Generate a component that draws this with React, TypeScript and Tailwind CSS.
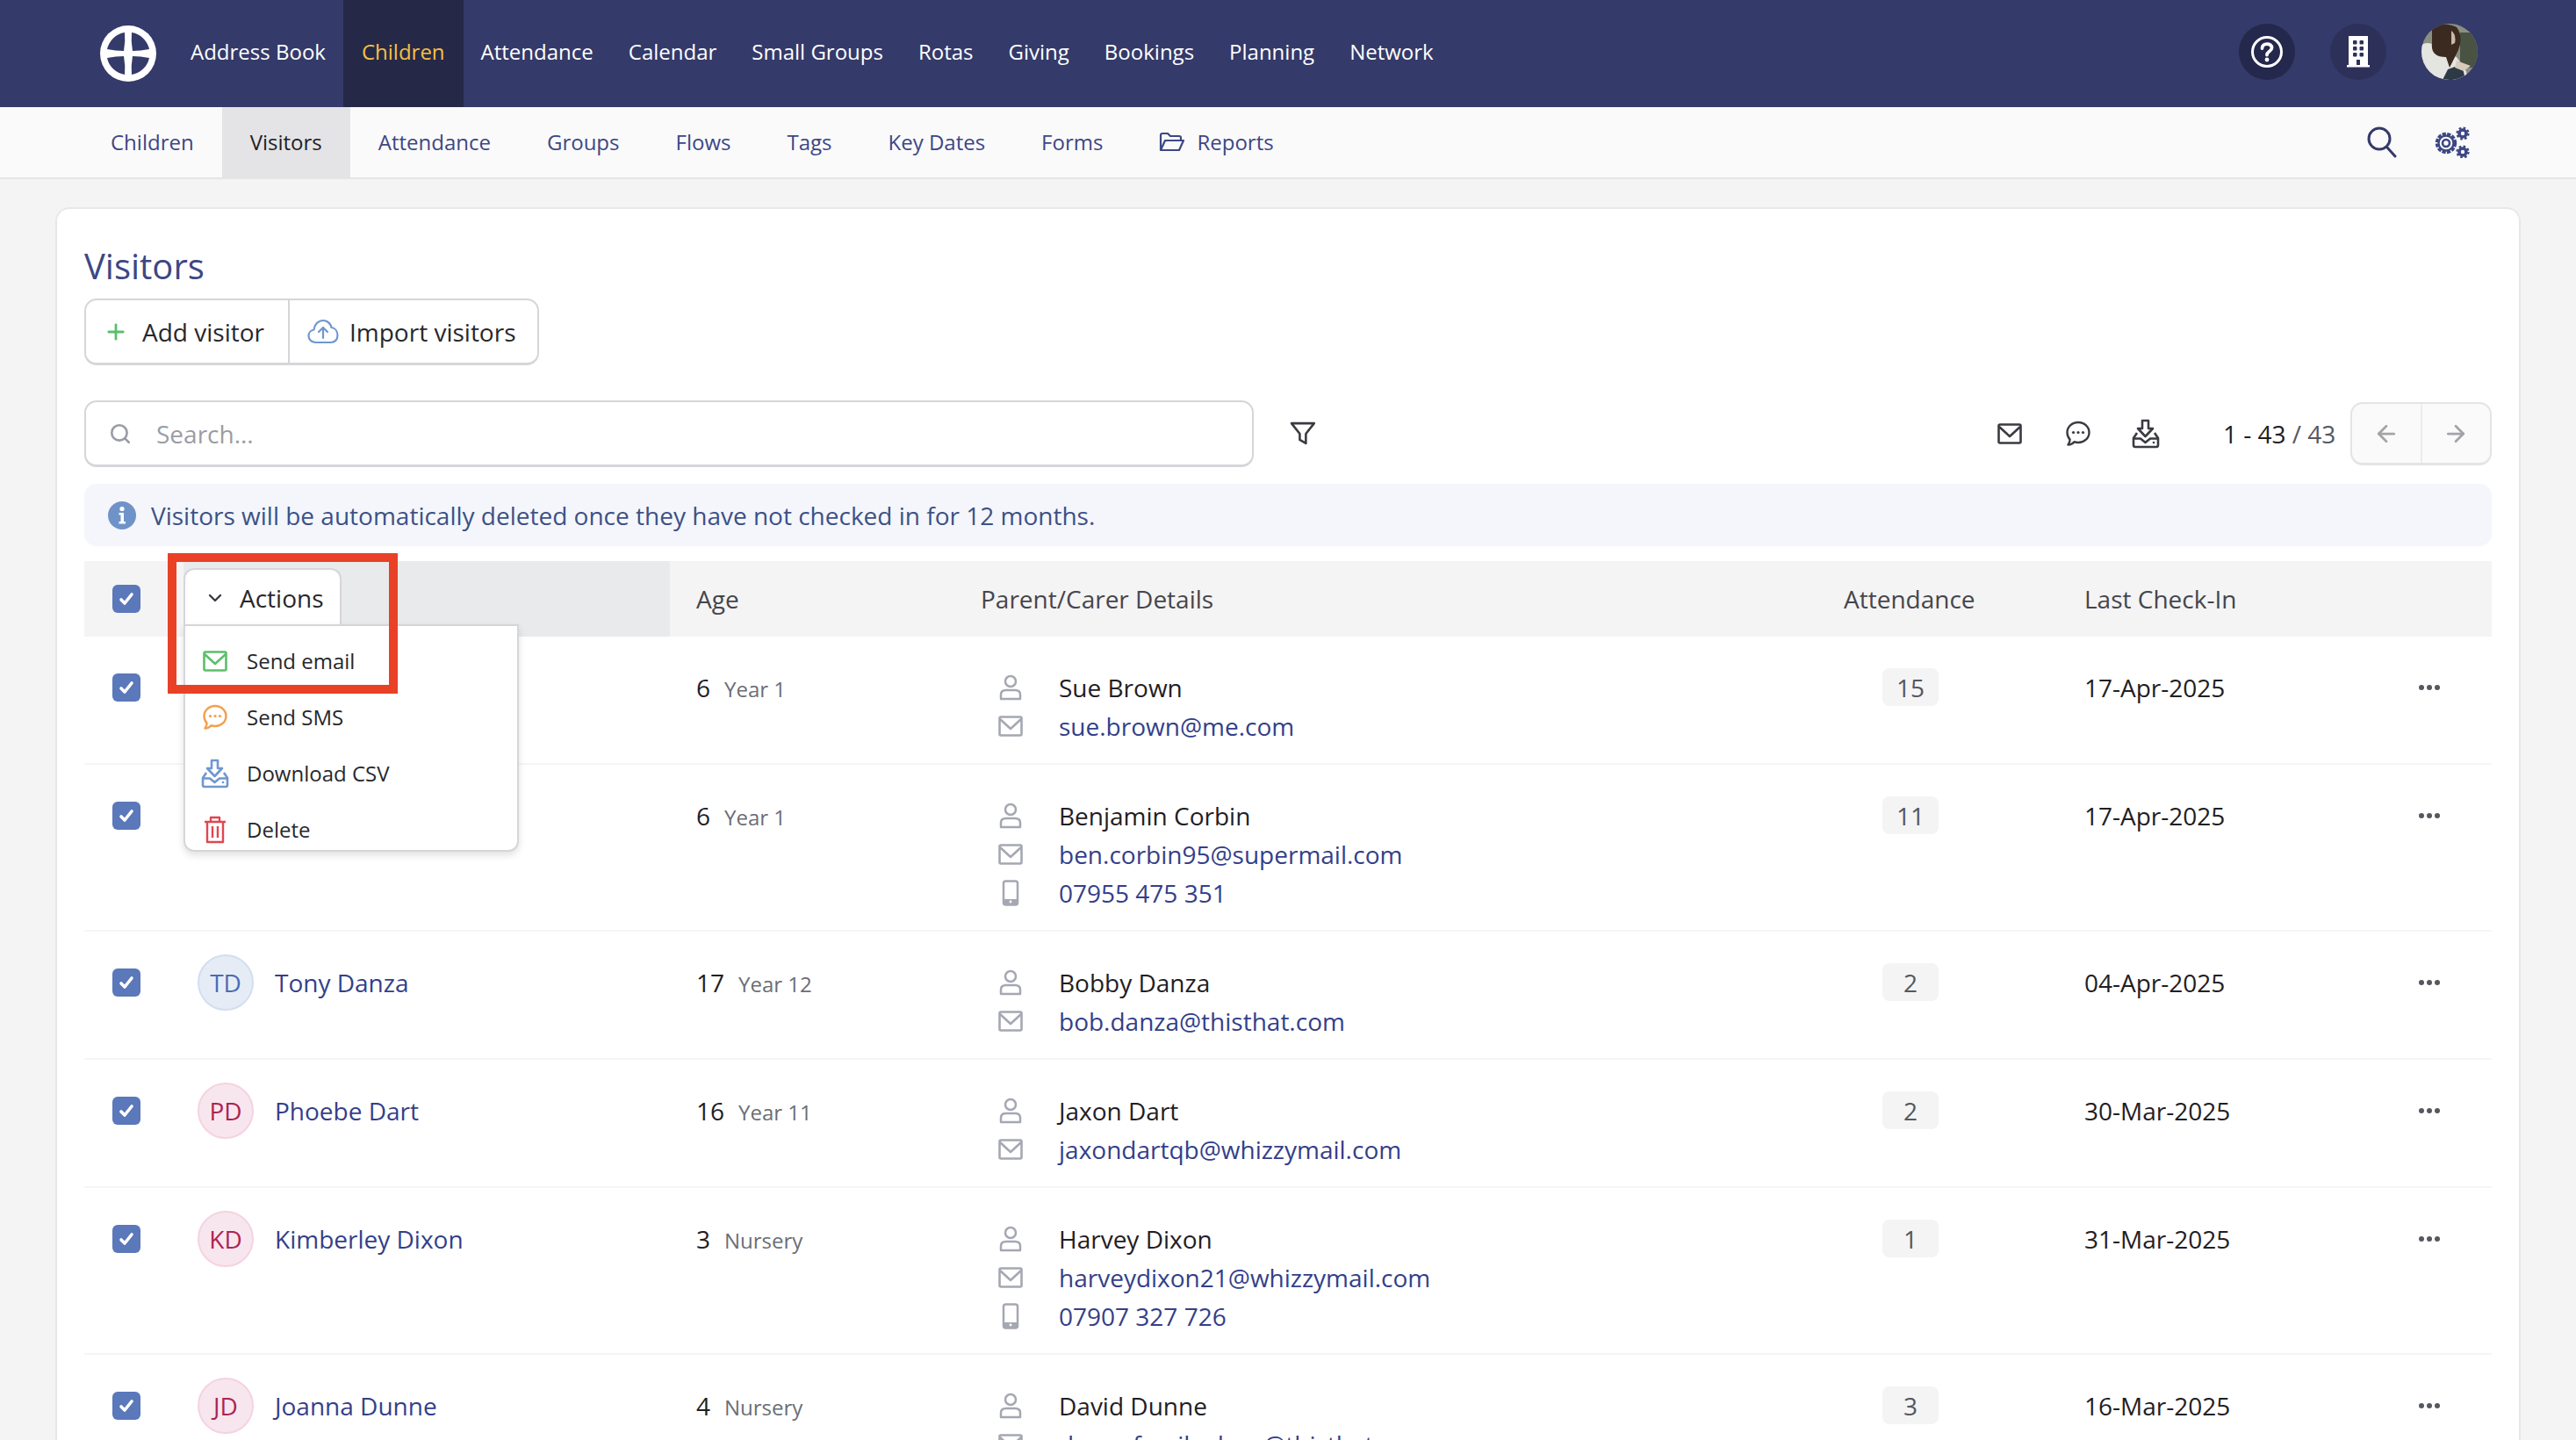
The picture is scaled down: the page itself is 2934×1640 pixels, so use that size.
import { ArrowLeft, ArrowRight, ChevronDown, Plus, Search } from 'lucide-react'

const topNav = ['Address Book', 'Children', 'Attendance', 'Calendar', 'Small Groups', 'Rotas', 'Giving', 'Bookings', 'Planning', 'Network']
const subNav = ['Children', 'Visitors', 'Attendance', 'Groups', 'Flows', 'Tags', 'Key Dates', 'Forms']

interface Visitor {
  name?: string
  initials?: string
  tone?: 'blue' | 'pink'
  age: string
  group: string
  parent: string
  email: string
  phone?: string
  attendance: string
  lastCheckIn: string
}

const visitors: Visitor[] = [
  { age: '6', group: 'Year 1', parent: 'Sue Brown', email: 'sue.brown@me.com', attendance: '15', lastCheckIn: '17-Apr-2025' },
  { age: '6', group: 'Year 1', parent: 'Benjamin Corbin', email: 'ben.corbin95@supermail.com', phone: '07955 475 351', attendance: '11', lastCheckIn: '17-Apr-2025' },
  { name: 'Tony Danza', initials: 'TD', tone: 'blue', age: '17', group: 'Year 12', parent: 'Bobby Danza', email: 'bob.danza@thisthat.com', attendance: '2', lastCheckIn: '04-Apr-2025' },
  { name: 'Phoebe Dart', initials: 'PD', tone: 'pink', age: '16', group: 'Year 11', parent: 'Jaxon Dart', email: 'jaxondartqb@whizzymail.com', attendance: '2', lastCheckIn: '30-Mar-2025' },
  { name: 'Kimberley Dixon', initials: 'KD', tone: 'pink', age: '3', group: 'Nursery', parent: 'Harvey Dixon', email: 'harveydixon21@whizzymail.com', phone: '07907 327 726', attendance: '1', lastCheckIn: '31-Mar-2025' },
  { name: 'Joanna Dunne', initials: 'JD', tone: 'pink', age: '4', group: 'Nursery', parent: 'David Dunne', email: 'dunnefamily.dave@thisthat.com', attendance: '3', lastCheckIn: '16-Mar-2025' },
]

function Logo() {
  return (
    <svg width="64" height="64" viewBox="0 0 64 64">
      <circle cx="32" cy="32" r="32" fill="#fff" />
      <path d="M28 8 A24.5 24.5 0 0 0 8 27 Q18 29 27 29 Q29 18 28 8Z" fill="#343a69" />
      <path d="M36 8 A24.5 24.5 0 0 1 56 27 Q46 29 37 29 Q35 18 36 8Z" fill="#343a69" />
      <path d="M28 56 A24.5 24.5 0 0 1 8 37 Q18 35 27 35 Q29 46 28 56Z" fill="#343a69" />
      <path d="M36 56 A24.5 24.5 0 0 0 56 37 Q46 35 37 35 Q35 46 36 56Z" fill="#343a69" />
    </svg>
  )
}

function Photo() {
  return (
    <svg width="64" height="64" viewBox="0 0 64 64" className="rounded-full">
      <rect width="64" height="64" fill="#8b8f82" />
      <rect x="44" y="10" width="20" height="40" fill="#4a5244" />
      <path d="M0 64 L0 24 Q10 18 22 30 L40 38 L50 52 L54 64Z" fill="#e4e5e1" />
      <path d="M12 6 Q24 -4 40 4 Q48 14 42 30 L32 50 L28 38 Q10 38 12 22Z" fill="#3b2a20" />
      <path d="M34 8 Q40 12 38 22 L34 24Z" fill="#c9b8a6" />
      <path d="M24 64 L30 52 L46 46 L50 64Z" fill="#2d3a46" />
      <path d="M40 42 L56 48 L48 54 L38 50Z" fill="#d8cbbb" />
    </svg>
  )
}

function MailIcon({ color, size = 28 }: { color: string; size?: number }) {
  return (
    <svg width={size} height={size} viewBox="0 0 28 28" fill="none" stroke={color} strokeWidth="2.6" strokeLinejoin="round">
      <rect x="1.5" y="3.5" width="25" height="21" rx="1.5" />
      <path d="M2 6 L14 17 L26 6" />
    </svg>
  )
}

function ChatIcon({ color }: { color: string }) {
  return (
    <svg width="28" height="30" viewBox="0 0 28 30" fill="none" stroke={color} strokeWidth="2.4" strokeLinejoin="round">
      <path d="M14 2 C21 2 26.5 7 26.5 13.5 C26.5 20 21 25 14 25 C12.5 25 11 24.8 9.5 24.2 C8 26 5.5 27.5 2.5 27.5 C4 25.8 4.6 23.8 4.6 21.6 C2.6 19.5 1.5 16.8 1.5 13.5 C1.5 7 7 2 14 2Z" />
      <g fill={color} stroke="none">
        <circle cx="8.5" cy="13.5" r="1.6" />
        <circle cx="14" cy="13.5" r="1.6" />
        <circle cx="19.5" cy="13.5" r="1.6" />
      </g>
    </svg>
  )
}

function TrayIcon({ color }: { color: string }) {
  return (
    <svg width="32" height="34" viewBox="0 0 32 34" fill="none" stroke={color} strokeWidth="2.6" strokeLinejoin="round">
      <path d="M12 2 H19 V11 H24 L15.5 20 L7 11 H12Z" />
      <path d="M6 16 L2 22 V30 Q2 32 4 32 H28 Q30 32 30 30 V22 L26 16" />
      <path d="M2 22.5 H10 L15.5 27 L21 22.5 H30" />
      <circle cx="25" cy="27" r="1.3" fill={color} stroke="none" />
    </svg>
  )
}

function PersonIcon() {
  return (
    <svg width="26" height="30" viewBox="0 0 26 30" fill="none" stroke="#a5a8b2" strokeWidth="2.5">
      <circle cx="13" cy="8" r="6" />
      <path d="M2 28 V23 Q2 18 8 18 H18 Q24 18 24 23 V28Z" strokeLinejoin="round" />
    </svg>
  )
}

function PhoneIcon() {
  return (
    <svg width="20" height="30" viewBox="0 0 20 30" fill="none">
      <rect x="2" y="1.5" width="16" height="27" rx="2.5" stroke="#a5a8b2" strokeWidth="2.5" />
      <rect x="2" y="22" width="16" height="6.5" fill="#a5a8b2" />
      <circle cx="10" cy="25" r="1.4" fill="#fff" />
    </svg>
  )
}

function Checkbox() {
  return (
    <div className="flex h-[32px] w-[32px] shrink-0 items-center justify-center rounded-[6px] bg-[#5a78ba]">
      <svg width="20" height="20" viewBox="0 0 20 20" fill="none" stroke="#fff" strokeWidth="3.6" strokeLinecap="round" strokeLinejoin="round">
        <path d="M4 11 L8 15 L16 5" />
      </svg>
    </div>
  )
}

function VisitorRow({ visitor }: { visitor: Visitor }) {
  const { name, initials, tone, age, group, parent, email, phone, attendance, lastCheckIn } = visitor
  return (
    <div className="flex border-b-2 border-[#f4f5f8] pt-[36px] pb-[20px] text-[28px] leading-[44px] text-[#1f2024]">
      <div className="flex h-[44px] w-[113px] shrink-0 items-center pl-[32px]">
        <Checkbox />
      </div>
      <div className="flex h-[44px] w-[584px] shrink-0 items-center gap-[24px] pl-[16px]">
        {initials && (
          <div
            className={
              tone === 'blue'
                ? 'flex h-[64px] w-[64px] shrink-0 items-center justify-center rounded-full border-2 border-[#d3deef] bg-[#e6ecf6] text-[#4a6cb3]'
                : 'flex h-[64px] w-[64px] shrink-0 items-center justify-center rounded-full border-2 border-[#f4d3e1] bg-[#f8e6ef] text-[#ad2450]'
            }
          >
            {initials}
          </div>
        )}
        <span className="text-[#343f8a]">{name}</span>
      </div>
      <div className="flex h-[44px] w-[324px] shrink-0 items-baseline gap-[16px]">
        <span>{age}</span>
        <span className="text-[24px] text-[#6b6e76]">{group}</span>
      </div>
      <div className="w-[983px] shrink-0">
        <div className="flex h-[44px] items-center">
          <div className="flex w-[89px] justify-center pr-[22px]"><PersonIcon /></div>
          <span>{parent}</span>
        </div>
        <div className="flex h-[44px] items-center">
          <div className="flex w-[89px] justify-center pr-[22px]"><MailIcon color="#a5a8b2" /></div>
          <span className="text-[#343f8a]">{email}</span>
        </div>
        {phone && (
          <div className="flex h-[44px] items-center">
            <div className="flex w-[89px] justify-center pr-[22px]"><PhoneIcon /></div>
            <span className="text-[#343f8a]">{phone}</span>
          </div>
        )}
      </div>
      <div className="w-[274px] shrink-0 pl-[44px]">
        <div className="flex h-[43px] w-[64px] items-center justify-center rounded-[8px] bg-[#f4f4f5] text-[#55585f]">{attendance}</div>
      </div>
      <div className="flex h-[44px] flex-1 items-center justify-between pr-[58px]">
        <span>{lastCheckIn}</span>
        <svg width="26" height="8" viewBox="0 0 26 8" fill="#55585f">
          <circle cx="4" cy="4" r="3" />
          <circle cx="13" cy="4" r="3" />
          <circle cx="22" cy="4" r="3" />
        </svg>
      </div>
    </div>
  )
}

export default function App() {
  return (
    <div className="h-[1640px] overflow-hidden bg-[#f4f4f4] font-['Open_Sans',sans-serif]">
      {/* Main nav */}
      <div className="flex h-[122px] items-center bg-[#343a69] pl-[114px] pr-[112px]">
        <Logo />
        <div className="ml-[19px] flex h-full flex-1 items-stretch">
          {topNav.map((item) => (
            <div
              key={item}
              className={
                item === 'Children'
                  ? 'flex items-center bg-[#252947] px-[21px] pb-[4px] text-[24px] font-medium text-[#f5c044]'
                  : 'flex items-center px-[20px] pb-[4px] text-[24px] font-medium text-white'
              }
            >
              {item}
            </div>
          ))}
        </div>
        <div className="flex items-center gap-[40px] pb-[4px]">
          <div className="flex h-[64px] w-[64px] items-center justify-center rounded-full bg-[#24284c]">
            <svg width="38" height="38" viewBox="0 0 38 38" fill="none" stroke="#fff">
              <circle cx="19" cy="19" r="16.5" strokeWidth="3" />
              <path d="M13.5 15 C13.5 8.5 24.5 8.5 24.5 14.5 C24.5 18.5 19 18.5 19 22.5" strokeWidth="3.8" strokeLinecap="round" />
              <circle cx="19" cy="28" r="2.4" fill="#fff" stroke="none" />
            </svg>
          </div>
          <div className="flex h-[64px] w-[64px] items-center justify-center rounded-full bg-[#2d3159]">
            <svg width="26" height="36" viewBox="0 0 26 36">
              <rect x="2" y="0" width="22" height="34" fill="#fff" />
              <rect x="0" y="33" width="26" height="2.5" fill="#fff" />
              <g fill="#2d3159">
                <rect x="7" y="5" width="4.5" height="4.5" rx="1" />
                <rect x="14.5" y="5" width="4.5" height="4.5" rx="1" />
                <rect x="7" y="12" width="4.5" height="4.5" rx="1" />
                <rect x="14.5" y="12" width="4.5" height="4.5" rx="1" />
                <rect x="7" y="19" width="4.5" height="4.5" rx="1" />
                <rect x="14.5" y="19" width="4.5" height="4.5" rx="1" />
                <rect x="11" y="27" width="4" height="6" />
              </g>
            </svg>
          </div>
          <Photo />
        </div>
      </div>

      {/* Sub nav */}
      <div className="flex h-[82px] items-stretch border-b-2 border-[#e4e4e6] bg-[#fafafa] pl-[94px] pr-[120px] pb-0">
        {subNav.map((item) => (
          <div
            key={item}
            className={
              item === 'Visitors'
                ? 'flex items-center bg-[#e4e4e6] px-[32px] text-[24px] font-medium text-[#1f2024]'
                : 'flex items-center px-[32px] text-[24px] font-medium text-[#3d4785]'
            }
          >
            {item}
          </div>
        ))}
        <div className="flex flex-1 items-center px-[32px] text-[24px] font-medium text-[#3d4785]">
          <svg width="30" height="24" viewBox="0 0 30 24" fill="none" stroke="#3d4785" strokeWidth="2.2" strokeLinejoin="round">
            <path d="M2 21 V4 Q2 2 4 2 H10 L13 5 H23 Q25 5 25 7 V9" />
            <path d="M2 21 L7 10 H28 L23 21Z" />
          </svg>
          <span className="ml-[13px]">Reports</span>
        </div>
        <div className="flex items-center gap-[42px]">
          <svg width="34" height="36" viewBox="0 0 34 36" fill="none" stroke="#343a69" strokeWidth="3" strokeLinecap="round">
            <circle cx="14" cy="14" r="12" />
            <path d="M23 24 L32 34" />
          </svg>
          <svg width="42" height="36" viewBox="0 0 42 36" fill="none" stroke="#3d4785">
            <circle cx="14" cy="19" r="4" strokeWidth="2.6" />
            <circle cx="14" cy="19" r="10.5" strokeWidth="3.4" strokeDasharray="4.2 1.4" />
            <circle cx="14" cy="19" r="8.5" strokeWidth="2.4" />
            <circle cx="33" cy="8" r="4" strokeWidth="3.6" />
            <circle cx="33" cy="8" r="6.4" strokeWidth="2.4" strokeDasharray="2.6 2.4" />
            <circle cx="33" cy="29" r="4" strokeWidth="3.6" />
            <circle cx="33" cy="29" r="6.4" strokeWidth="2.4" strokeDasharray="2.6 2.4" />
          </svg>
        </div>
      </div>

      {/* Card */}
      <div className="relative mx-[63px] mt-[32px] h-[1500px] rounded-t-[16px] border-2 border-b-0 border-[#e8e8ea] bg-white px-[31px] pt-[38px]">
        <h1 className="text-[40px] font-medium leading-[54px] text-[#3d4785]">Visitors</h1>

        <div className="mt-[10px] inline-flex h-[76px] items-stretch rounded-[14px] border-2 border-b-[3px] border-[#d6d6da] text-[28px] text-[#27282c]">
          <div className="flex w-[232px] items-center gap-[16px] border-r-2 border-[#d6d6da] pl-[20px]">
            <Plus size={28} color="#5bbf6b" strokeWidth={2.4} />
            <span>Add visitor</span>
          </div>
          <div className="flex items-center gap-[12px] pl-[20px] pr-[24px]">
            <svg width="36" height="32" viewBox="0 0 36 32" fill="none" stroke="#6f97d0" strokeWidth="2.2" strokeLinejoin="round">
              <path d="M10 28 C4 28 1.5 24 1.5 20.5 C1.5 17 4 14 7.5 13.5 C8 8 12 3 18 3 C24 3 27 8 27.5 11 C31.5 11.5 34.5 15 34.5 20 C34.5 25 31 28 27 28Z" />
              <path d="M18 23 V11 M13 16 L18 11 L23 16" strokeLinecap="round" />
            </svg>
            <span>Import visitors</span>
          </div>
        </div>

        {/* Search row */}
        <div className="mt-[40px] flex items-center">
          <div className="flex h-[76px] w-[1343px] items-center rounded-[14px] border-2 border-b-[3px] border-[#d6d6da] pl-[26px] text-[28px] text-[#9a9ca5]">
            <Search size={26} color="#9a9ca5" strokeWidth={2.4} />
            <span className="ml-[28px]">Search...</span>
          </div>
          <svg className="ml-[41px]" width="30" height="30" viewBox="0 0 30 30" fill="none" stroke="#3a3b42" strokeWidth="2.6" strokeLinejoin="round">
            <path d="M2 3 H28 L18.5 15 V26 L11.5 22 V15Z" />
          </svg>
          <div className="ml-[776px]"><MailIcon color="#3a3b42" /></div>
          <div className="ml-[50px]"><ChatIcon color="#3a3b42" /></div>
          <div className="ml-[47px]"><TrayIcon color="#3a3b42" /></div>
          <div className="ml-[72px] whitespace-nowrap text-[28px] text-[#1f2024]">
            1 - 43 <span className="text-[#55585f]">/ 43</span>
          </div>
          <div className="ml-[17px] flex h-[72px] w-[162px] rounded-[14px] border-2 border-b-[3px] border-[#e4e4e6] bg-[#fafafa]">
            <div className="flex flex-1 items-center justify-center border-r-2 border-[#ececee]">
              <ArrowLeft size={30} color="#a3a4a9" strokeWidth={2.2} />
            </div>
            <div className="flex flex-1 items-center justify-center">
              <ArrowRight size={30} color="#a3a4a9" strokeWidth={2.2} />
            </div>
          </div>
        </div>

        {/* Info banner */}
        <div className="mt-[19px] flex h-[71px] items-center rounded-[14px] bg-[#f4f6fb] pl-[27px] text-[28px] text-[#3d5186]">
          <svg width="32" height="32" viewBox="0 0 32 32">
            <circle cx="16" cy="16" r="16" fill="#6f93c9" />
            <circle cx="16" cy="8.5" r="2.6" fill="#fff" />
            <path d="M12.5 13 H18 V23 H20 V25.5 H12.5 V23 H14.5 V15.5 H12.5Z" fill="#fff" />
          </svg>
          <span className="ml-[17px]">Visitors will be automatically deleted once they have not checked in for 12 months.</span>
        </div>

        {/* Table head */}
        <div className="mt-[17px] flex h-[86px] items-center bg-[#f4f4f4] text-[28px] text-[#45464d]">
          <div className="flex h-full w-[113px] shrink-0 items-center pl-[32px]">
            <Checkbox />
          </div>
          <div className="h-full w-[554px] shrink-0 bg-[#e9eaec]" />
          <div className="w-[354px] shrink-0 pl-[30px]">Age</div>
          <div className="w-[983px] shrink-0">Parent/Carer Details</div>
          <div className="w-[274px] shrink-0">Attendance</div>
          <div>Last Check-In</div>
        </div>

        {visitors.map((v) => (
          <VisitorRow key={v.email} visitor={v} />
        ))}

        {/* Actions menu */}
        <div className="absolute left-[144px] top-[409px] flex h-[66px] w-[180px] items-center gap-[16px] rounded-t-[12px] border-2 border-b-0 border-[#d6d6da] bg-white pl-[22px] text-[28px] text-[#27282c]">
          <ChevronDown size={24} color="#3a3b42" strokeWidth={2.4} />
          <span>Actions</span>
        </div>
        <div className="absolute left-[144px] top-[473px] h-[259px] w-[382px] rounded-b-[12px] border-2 border-[#d6d6da] bg-white pt-[8px] text-[24px] text-[#27282c] shadow-[0_4px_8px_rgba(0,0,0,0.12)]">
          <div className="flex h-[64px] items-center gap-[20px] pl-[18px]">
            <div className="flex w-[32px] justify-center"><MailIcon color="#5bbf6b" /></div>
            <span>Send email</span>
          </div>
          <div className="flex h-[64px] items-center gap-[20px] pl-[18px]">
            <div className="flex w-[32px] justify-center"><ChatIcon color="#f2a04e" /></div>
            <span>Send SMS</span>
          </div>
          <div className="flex h-[64px] items-center gap-[20px] pl-[18px]">
            <div className="flex w-[32px] justify-center"><TrayIcon color="#6f97d0" /></div>
            <span>Download CSV</span>
          </div>
          <div className="flex h-[64px] items-center gap-[20px] pl-[18px]">
            <div className="flex w-[32px] justify-center">
              <svg width="26" height="32" viewBox="0 0 26 32" fill="none" stroke="#e0474f" strokeWidth="2.4" strokeLinejoin="round">
                <path d="M1 7 H25 M8 7 V2 H18 V7 M4 7 V30 H22 V7 M10 12 V25 M16 12 V25" />
              </svg>
            </div>
            <span>Delete</span>
          </div>
        </div>

        {/* Annotation */}
        <div className="absolute left-[126px] top-[392px] h-[160px] w-[262px] border-[10px] border-[#e94126]" />
      </div>
    </div>
  )
}
